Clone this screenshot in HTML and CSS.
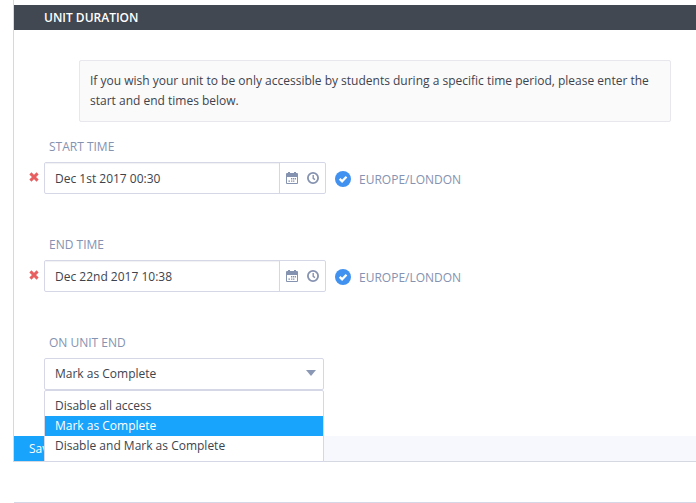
FILE: index.html
```html
<!DOCTYPE html>
<html lang="en">
<head>
<meta charset="utf-8">
<title>Unit duration</title>
<link rel="stylesheet" href="styles.css">
</head>
<body>
<svg class="sprite" aria-hidden="true">
  <symbol id="cross" viewBox="0 0 10 10"><path d="M1.4 1.4 8.6 8.6M8.6 1.4 1.4 8.6" fill="none" stroke="currentColor" stroke-width="2.9"/></symbol>
  <symbol id="calendar" viewBox="0 0 12 12"><path fill="currentColor" fill-rule="evenodd" d="M2 0h2v1h4V0h2v1h1q1 0 1 1v9q0 1-1 1H1q-1 0-1-1V2q0-1 1-1h1zM1 5V11h10V5z"/><path fill="currentColor" d="M5 6h1.4v1.4H5zM7 6h1.4v1.4H7zM9 6h1v1.4H9zM2.4 8.4h1.6v1.4H2.4zM5 8.4h1.4v1.4H5zM7 8.4h1.4v1.4H7z"/></symbol>
  <symbol id="clock" viewBox="0 0 12 12"><circle cx="6" cy="6" r="5.1" fill="none" stroke="currentColor" stroke-width="1.8"/><path d="M6.2 3v3.4L8 7.6" fill="none" stroke="currentColor" stroke-width="1.4"/></symbol>
  <symbol id="check" viewBox="0 0 16 16"><circle cx="8" cy="8" r="8" fill="#4192f0"/><path d="M4.7 7.9 7.1 10.3 11.5 5.8" fill="none" stroke="#fff" stroke-width="2.3"/></symbol>
</svg>
<main class="panel">
  <h2 class="panel-title">UNIT DURATION</h2>
  <div class="panel-body">
    <p class="info">If you wish your unit to be only accessible by students during a specific time period, please enter the start and end times below.</p>
    <section class="field">
      <label class="label">START TIME</label>
      <div class="row">
        <svg class="cross"><use href="#cross"/></svg>
        <div class="input-group">
          <div class="input">Dec 1st 2017 00:30</div>
          <div class="addon"><svg class="icon calendar"><use href="#calendar"/></svg><svg class="icon"><use href="#clock"/></svg></div>
        </div>
        <svg class="check"><use href="#check"/></svg>
        <span class="zone">EUROPE/LONDON</span>
      </div>
    </section>
    <section class="field">
      <label class="label">END TIME</label>
      <div class="row">
        <svg class="cross"><use href="#cross"/></svg>
        <div class="input-group">
          <div class="input">Dec 22nd 2017 10:38</div>
          <div class="addon"><svg class="icon calendar"><use href="#calendar"/></svg><svg class="icon"><use href="#clock"/></svg></div>
        </div>
        <svg class="check"><use href="#check"/></svg>
        <span class="zone">EUROPE/LONDON</span>
      </div>
    </section>
    <section class="field">
      <label class="label">ON UNIT END</label>
      <div class="select">
        <span>Mark as Complete</span><i class="caret"></i>
        <ul class="menu">
          <li>Disable all access</li>
          <li class="selected">Mark as Complete</li>
          <li>Disable and Mark as Complete</li>
        </ul>
      </div>
    </section>
  </div>
  <footer class="panel-footer"><button class="save">Save</button></footer>
</main>
<hr class="divider">
</body>
</html>
```

FILE: styles.css
```css
* { box-sizing: border-box; }
body {
  margin: 0;
  height: 503px;
  overflow: hidden;
  background: #fff;
  color: #3d434d;
  font: 12px/20px "Open Sans", sans-serif;
}
.sprite { display: none; }
.panel {
  height: 462px;
  margin-left: 13px;
  padding-top: 5px;
  border-left: 1px solid #d5d7e5;
  border-bottom: 1px solid #d5d7e1;
}
.panel-title {
  height: 25px;
  margin: 0;
  padding-left: 30px;
  background: #424851;
  color: #fff;
  font-size: 12px;
  font-weight: 600;
  line-height: 25px;
}
.panel-body { height: 406px; padding: 30px 25px 0 15px; }
.info {
  height: 62px;
  margin: 0 0 14px 50px;
  padding: 10px;
  border: 1px solid #e7e7ed;
  border-radius: 2px;
  background: #fafafa;
}
.field { height: 98px; }
.label {
  display: block;
  height: 26px;
  padding-left: 20px;
  color: #8592b0;
  line-height: 21px;
}
.row { display: flex; align-items: center; height: 32px; }
.cross { width: 10px; height: 10px; margin: 0 5px 2px 0; color: #e85f62; }
.input-group {
  display: flex;
  width: 282px;
  height: 32px;
  border: 1px solid #d5d7e7;
  border-radius: 2px;
}
.input {
  width: 235px;
  padding-left: 10px;
  border-right: 1px solid #d5d7e7;
  box-shadow: inset 0 1px 1px #f1f1f3;
  line-height: 31px;
}
.addon { display: flex; align-items: center; gap: 9px; padding-left: 6px; color: #8592b0; }
.icon { width: 12px; height: 12px; }
.calendar { width: 12px; }
.check { width: 16px; height: 16px; margin: 1px 8px 0 9px; }
.zone { color: #8592b0; padding-top: 3px; }
.select {
  position: relative;
  display: flex;
  align-items: center;
  justify-content: space-between;
  width: 280px;
  height: 32px;
  margin-left: 15px;
  padding: 0 7px 1px 10px;
  border: 1px solid #d5d7e7;
  border-radius: 2px;
}
.caret { margin-bottom: 1px; border: 5px solid transparent; border-top: 6px solid #8b98b5; border-bottom: 0; }
.menu {
  position: absolute;
  z-index: 1;
  top: 31px;
  left: -1px;
  width: 280px;
  height: 72px;
  margin: 0;
  padding: 5px 0 0;
  border: 1px solid #d5d7e7;
  border-radius: 2px 2px 0 0;
  background: #fff;
  list-style: none;
}
.menu li { height: 20px; padding-left: 10px; }
.menu .selected { background: #18a3fc; color: #fff; }
.panel-footer { height: 25px; background: #f7f8fd; }
.save {
  width: 56px;
  height: 25px;
  padding: 0;
  border: 0;
  background: #18a3fc;
  color: #fff;
  font: 12px/25px "Open Sans", sans-serif;
}
.divider { height: 1px; margin: 40px 0 0 14px; border: 0; background: #d5d7e7; }
```
